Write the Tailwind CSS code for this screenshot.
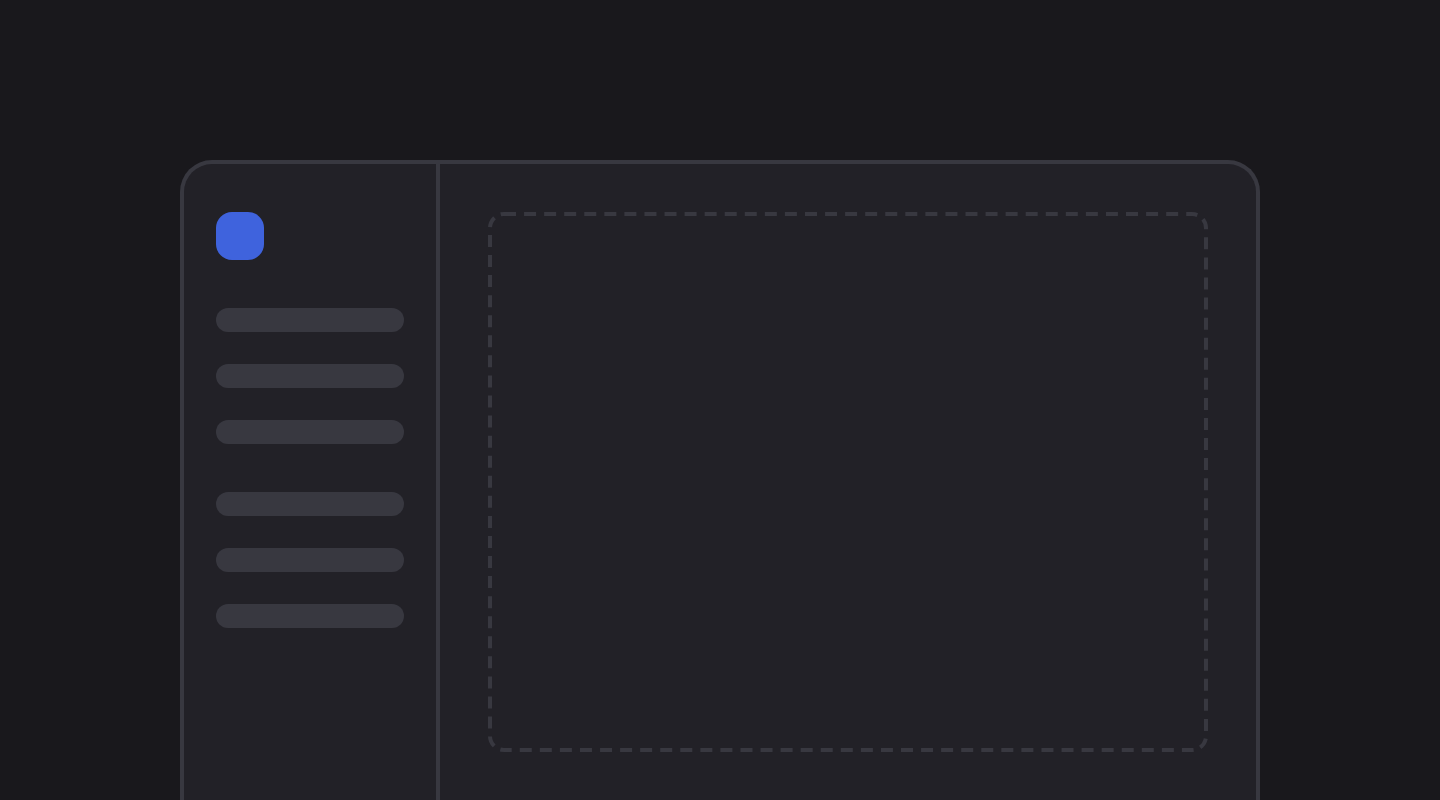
<!DOCTYPE html>
<html lang="en">
<head>
<meta charset="utf-8">
<meta name="viewport" content="width=device-width, initial-scale=1">
<title>Dashboard</title>
<script src="https://cdn.jsdelivr.net/npm/@tailwindcss/browser@4"></script>
</head>
<body class="h-screen overflow-hidden bg-[#19181c] px-[12.5%] pt-40">
<div class="flex h-full overflow-hidden rounded-t-[32px] border-4 border-b-0 border-[#383840] bg-[#222127]">
  <aside class="flex w-64 shrink-0 flex-col gap-12 border-r-4 border-[#383840] px-8 pt-12">
    <div class="size-12 rounded-2xl bg-[#3f63dd]"></div>
    <div class="flex flex-col gap-8">
      <div class="h-6 rounded-full bg-[#383840]"></div>
      <div class="h-6 rounded-full bg-[#383840]"></div>
      <div class="h-6 rounded-full bg-[#383840]"></div>
    </div>
    <div class="flex flex-col gap-8">
      <div class="h-6 rounded-full bg-[#383840]"></div>
      <div class="h-6 rounded-full bg-[#383840]"></div>
      <div class="h-6 rounded-full bg-[#383840]"></div>
    </div>
  </aside>
  <main class="flex grow p-12">
    <!-- Empty content area; the outer half of the stroke is clipped by the rounded box -->
    <svg class="min-w-0 grow overflow-hidden rounded-2xl" aria-hidden="true">
      <rect width="100%" height="100%" rx="16" fill="none" stroke="#383840" stroke-width="8" stroke-dasharray="12 8.065"/>
    </svg>
  </main>
</div>
</body>
</html>
